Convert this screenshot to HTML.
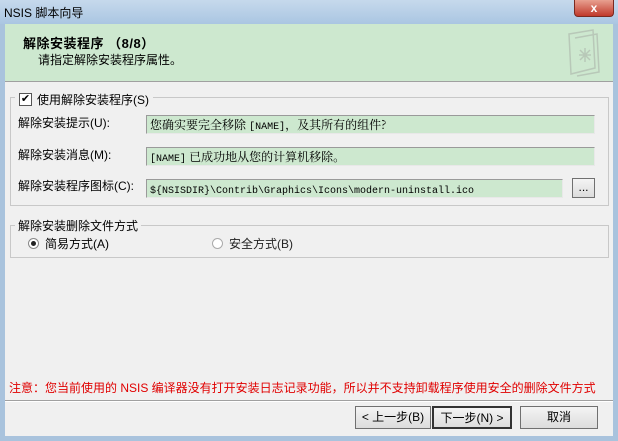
<!DOCTYPE html>
<html><head><meta charset="utf-8"><style>
*{margin:0;padding:0;box-sizing:border-box}
body{width:618px;height:441px;overflow:hidden;background:#a9c3dd;font-family:"Liberation Sans","Noto Sans CJK SC","WenQuanYi Zen Hei",sans-serif;font-size:12px;color:#000;position:relative}
.a{position:absolute}
.title{left:0;top:0;width:618px;height:24px;background:linear-gradient(#c6d9ec,#aac6e2)}
.client{left:5px;top:24px;width:608px;height:412px;background:#f0f0f0}
.hdr{left:5px;top:24px;width:608px;height:58px;background:#cde8cf;border-bottom:1px solid #a0a0a0}
.grp{border:1px solid #c8c8c8;}
.inp{background:#cde8cf;border:1px solid #9a9a9a;border-right-color:#e8e8e8;border-bottom-color:#e8e8e8;height:19px;padding-left:3px;line-height:17px;font-family:"Noto Serif CJK SC",serif;font-size:12px;white-space:nowrap}
.inp span{font-family:"Liberation Mono",monospace;font-size:10px}
.btn{border:1px solid #707070;background:linear-gradient(#f4f4f4,#dcdcdc);text-align:center;line-height:21px;height:23px}
</style></head><body>
<div class="a title"></div>
<div class="a" style="left:4px;top:4px;font-size:12px">NSIS 脚本向导</div>
<div class="a" style="left:574px;top:0;width:40px;height:17px;background:linear-gradient(#e8a090,#c0392b);border:1px solid #7a2a20;border-top:none;border-radius:0 0 4px 4px;color:#fff;text-align:center;font-weight:bold;line-height:16px">x</div>
<div class="a client"></div>
<div class="a hdr"></div>
<div class="a" style="left:23px;top:33px;font-weight:bold;font-size:13px;letter-spacing:0.5px">解除安装程序 （8/8）</div>
<div class="a" style="left:38px;top:51px">请指定解除安装程序属性。</div>
<svg class="a" style="left:565px;top:28px" width="40" height="50" viewBox="0 0 40 50"><g fill="none" stroke="#b8c8b8" stroke-width="1.5"><path d="M4 6 L28 2 L30 40 L6 46 Z"/><path d="M10 10 L32 6 L34 44 L12 48"/><path d="M20 20 L20 34 M14 27 L26 27 M15 22 L25 32 M25 22 L15 32"/></g></svg>
<div class="a grp" style="left:10px;top:97px;width:599px;height:109px"></div>
<div class="a" style="left:15px;top:91px;background:#f0f0f0;padding:0 4px;display:flex;align-items:center;gap:5px"><span style="width:13px;height:13px;border:1px solid #555;background:#fff;display:inline-block;font-size:11px;line-height:11px;text-align:center">✔</span>使用解除安装程序(S)</div>
<div class="a" style="left:18px;top:114px">解除安装提示(U):</div>
<div class="a inp" style="left:146px;top:115px;width:449px">您确实要完全移除 <span>[NAME]</span>，及其所有的组件?</div>
<div class="a" style="left:18px;top:146px">解除安装消息(M):</div>
<div class="a inp" style="left:146px;top:147px;width:449px"><span>[NAME]</span> 已成功地从您的计算机移除。</div>
<div class="a" style="left:18px;top:177px">解除安装程序图标(C):</div>
<div class="a inp" style="left:146px;top:179px;width:417px"><span>${NSISDIR}\Contrib\Graphics\Icons\modern-uninstall.ico</span></div>
<div class="a btn" style="left:572px;top:178px;width:23px;height:20px;line-height:16px">...</div>
<div class="a grp" style="left:10px;top:225px;width:599px;height:33px"></div>
<div class="a" style="left:15px;top:217px;background:#f0f0f0;padding:0 3px">解除安装删除文件方式</div>
<div class="a" style="left:28px;top:235px;display:flex;align-items:center;gap:6px"><span style="width:11px;height:11px;border-radius:50%;border:1px solid #888;background:#fff;display:inline-flex;align-items:center;justify-content:center"><span style="width:5px;height:5px;border-radius:50%;background:#222"></span></span>简易方式(A)</div>
<div class="a" style="left:212px;top:235px;display:flex;align-items:center;gap:6px;color:#222"><span style="width:11px;height:11px;border-radius:50%;border:1px solid #aaa;background:#fff;display:inline-block"></span>安全方式(B)</div>
<div class="a" style="left:9px;top:379px;color:#e00000;font-size:12px">注意：您当前使用的 NSIS 编译器没有打开安装日志记录功能，所以并不支持卸载程序使用安全的删除文件方式</div>
<div class="a" style="left:5px;top:400px;width:608px;border-top:1px solid #a0a0a0;border-bottom:1px solid #fff"></div>
<div class="a btn" style="left:355px;top:406px;width:76px">&lt; 上一步(B)</div>
<div class="a btn" style="left:432px;top:406px;width:80px;border:2px solid #333">下一步(N) &gt;</div>
<div class="a btn" style="left:520px;top:406px;width:78px">取消</div>
</body></html>
